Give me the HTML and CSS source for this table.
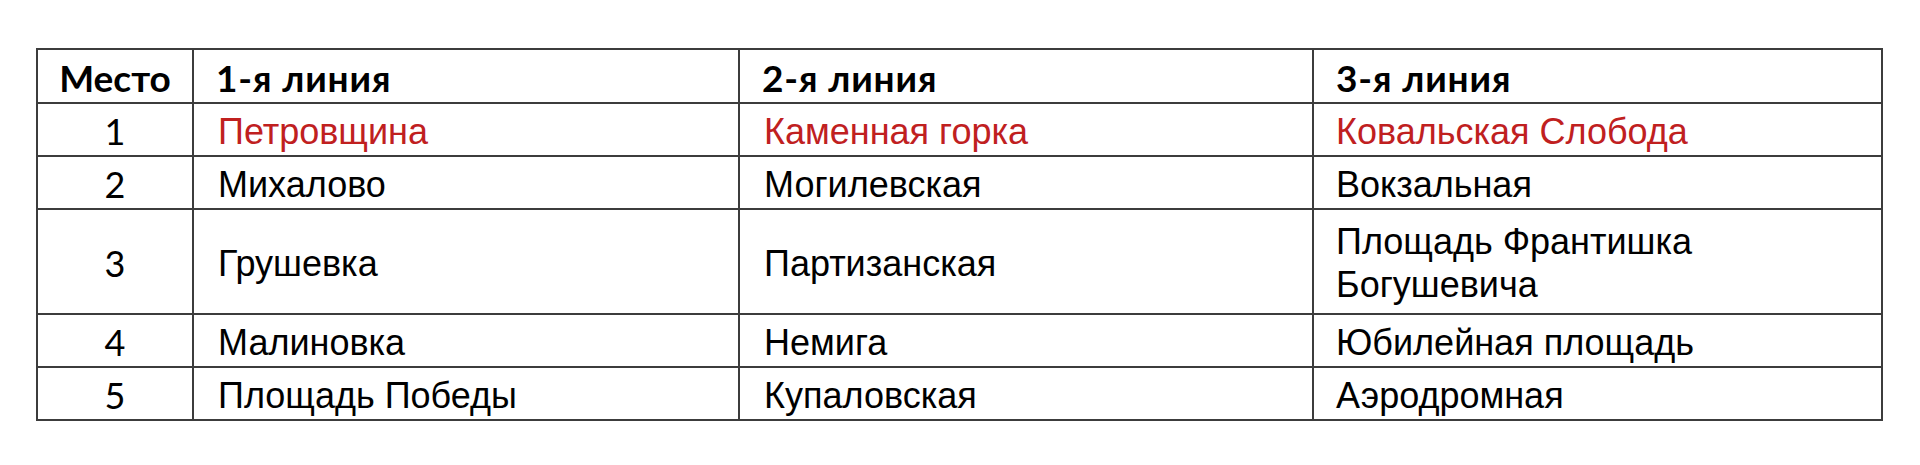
FILE: index.html
```html
<!DOCTYPE html>
<html lang="ru">
<head>
<meta charset="utf-8">
<title>Станции</title>
<link rel="stylesheet" href="styles.css">
</head>
<body>
<div class="page">
  <table class="stations">
    <colgroup>
      <col class="c-place">
      <col class="c-line1">
      <col class="c-line2">
      <col class="c-line3">
    </colgroup>
    <thead>
      <tr class="r-head">
        <th class="place">Место</th>
        <th>1-я линия</th>
        <th>2-я линия</th>
        <th class="last">3-я линия</th>
      </tr>
    </thead>
    <tbody>
      <tr class="r-std top">
        <td class="num">1</td>
        <td>Петровщина</td>
        <td>Каменная горка</td>
        <td class="last">Ковальская Слобода</td>
      </tr>
      <tr class="r-std">
        <td class="num">2</td>
        <td>Михалово</td>
        <td>Могилевская</td>
        <td class="last">Вокзальная</td>
      </tr>
      <tr class="r-tall">
        <td class="num">3</td>
        <td>Грушевка</td>
        <td>Партизанская</td>
        <td class="last">Площадь Франтишка<br>Богушевича</td>
      </tr>
      <tr class="r-std">
        <td class="num">4</td>
        <td>Малиновка</td>
        <td>Немига</td>
        <td class="last">Юбилейная площадь</td>
      </tr>
      <tr class="r-std">
        <td class="num">5</td>
        <td>Площадь Победы</td>
        <td>Купаловская</td>
        <td class="last">Аэродромная</td>
      </tr>
    </tbody>
  </table>
</div>
</body>
</html>
```

FILE: styles.css
```css
html, body {
  margin: 0;
  padding: 0;
  background: #ffffff;
}

.page {
  padding: 48px 0 0 36px;
}

.stations {
  border-collapse: collapse;
  table-layout: fixed;
  width: 1845px;
  font-family: "Liberation Sans", Arial, sans-serif;
  font-size: 36px;
  color: #000000;
}

.c-place { width: 156px; }
.c-line1 { width: 546px; }
.c-line2 { width: 574px; }
.c-line3 { width: 569px; }

.stations th,
.stations td {
  border: 2px solid #3c3c3c;
  padding: 3px 0 0 24px;
  vertical-align: middle;
  text-align: left;
  line-height: 43px;
  white-space: nowrap;
}

.stations th {
  font-family: Lato, "Open Sans", sans-serif;
  font-weight: 700;
  font-size: 37px;
  letter-spacing: 0.8px;
  padding-top: 2px;
  padding-left: 22px;
}

.stations .last {
  padding-left: 22px;
}

.stations th.place {
  letter-spacing: 0;
}

.stations th.place,
.stations td.num {
  text-align: center;
  padding-left: 0;
}

.stations td.num {
  font-family: Lato, "Open Sans", sans-serif;
  font-size: 36px;
  font-weight: 400;
  padding-top: 4px;
}

.r-head { height: 54px; }
.r-std { height: 53px; }
.r-tall { height: 105px; }

.top td:not(.num) {
  color: #c0201f;
}
```
